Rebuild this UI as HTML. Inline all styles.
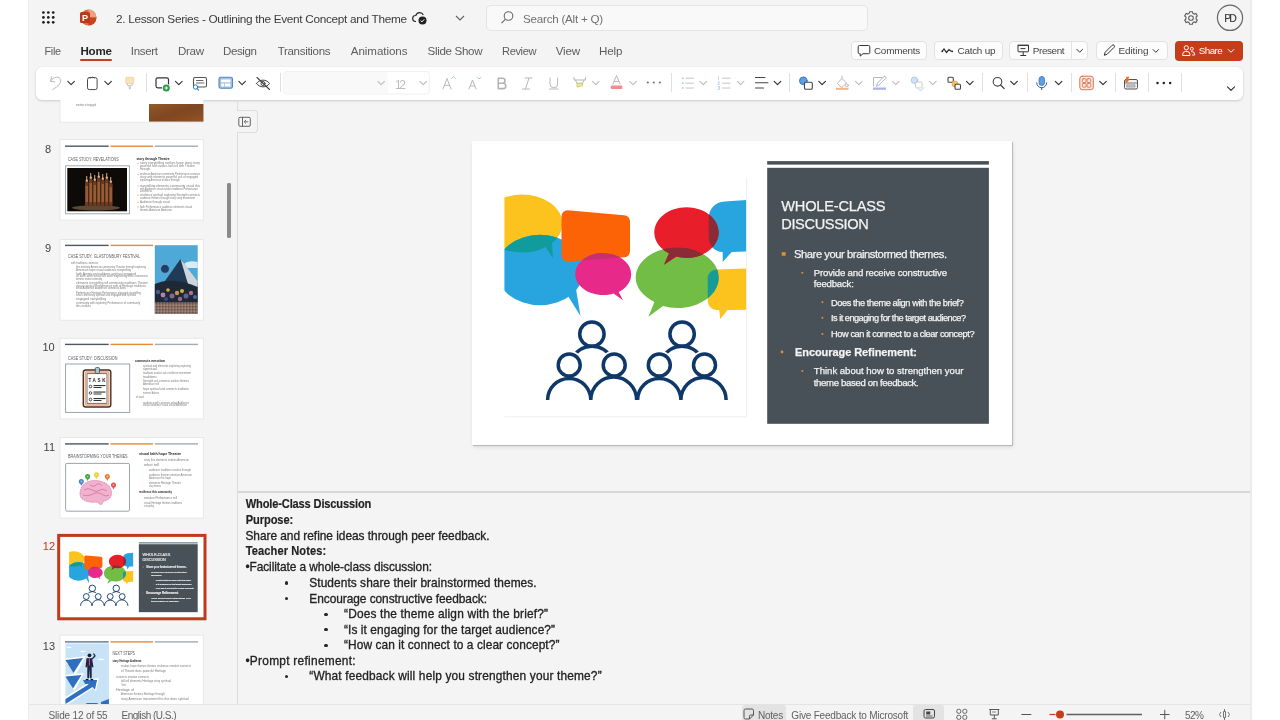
<!DOCTYPE html>
<html><head><meta charset="utf-8">
<style>
*{box-sizing:border-box;margin:0;padding:0}
html,body{width:1280px;height:720px;overflow:hidden;background:#fff}
body{position:relative;font-family:"Liberation Sans",sans-serif;-webkit-font-smoothing:antialiased}
.a{position:absolute}
.t{position:absolute;line-height:1;white-space:nowrap}
svg{position:absolute;overflow:visible}
#app{position:absolute;left:28px;top:0;width:1224px;height:720px;background:#f4f4f4;border-left:1px solid #ececec;border-right:2px solid #ebebeb}
.btn{position:absolute;top:41px;height:19px;border:1px solid #e2e2e2;border-radius:4px;background:#fcfcfc}
.tab{color:#5f5f5f;font-size:11.6px;top:45.5px}
.rdiv{position:absolute;width:1px;background:#e0e0e0;top:73px;height:19px}
</style></head><body>
<div id="app"></div>

<!-- ===== TITLE BAR ===== -->
<svg style="left:0;top:0" width="1280" height="40">
  <g fill="#1b1b1b">
    <circle cx="43.4" cy="12.5" r="1.35"/><circle cx="48.3" cy="12.5" r="1.35"/><circle cx="53.2" cy="12.5" r="1.35"/>
    <circle cx="43.4" cy="17.4" r="1.35"/><circle cx="48.3" cy="17.4" r="1.35"/><circle cx="53.2" cy="17.4" r="1.35"/>
    <circle cx="43.4" cy="22.3" r="1.35"/><circle cx="48.3" cy="22.3" r="1.35"/><circle cx="53.2" cy="22.3" r="1.35"/>
  </g>
  <!-- ppt logo -->
  <circle cx="88.5" cy="17.5" r="8" fill="#e0683f"/>
  <path d="M88.5 9.5 A8 8 0 0 1 96.5 17.5 L88.5 17.5 Z" fill="#f0a07d"/>
  <path d="M88.5 17.5 L96.5 17.5 A8 8 0 0 1 88.5 25.5 Z" fill="#c8431f"/>
  <rect x="80" y="12" width="10" height="11" rx="1.5" fill="#b93a1a"/>
  <text x="82" y="21" font-family="Liberation Sans" font-weight="bold" font-size="9" fill="#fff">P</text>
  <!-- cloud -->
  <path d="M416 21.5 h-0.5 a3 3 0 0 1 0.3 -6 a4 4 0 0 1 7.5 -0.5" fill="none" stroke="#2a2a2a" stroke-width="1.2"/>
  <circle cx="422.5" cy="20.5" r="4" fill="#222"/>
  <path d="M420.6 20.6 l1.3 1.3 l2.3 -2.5" stroke="#fff" stroke-width="1" fill="none"/>
  <!-- chevron -->
  <path d="M456 16 l4 4 l4 -4" stroke="#616161" stroke-width="1.1" fill="none"/>
  <!-- gear -->
  <g transform="translate(1191 18)" fill="none" stroke="#5c5c5c" stroke-width="1.1">
    <circle r="2.3"/>
    <path d="M-1.4 -6.2 L1.4 -6.2 L1.9 -4.6 L3.3 -3.9 L4.9 -4.5 L6.3 -2.1 L5.1 -0.9 L5.1 0.9 L6.3 2.1 L4.9 4.5 L3.3 3.9 L1.9 4.6 L1.4 6.2 L-1.4 6.2 L-1.9 4.6 L-3.3 3.9 L-4.9 4.5 L-6.3 2.1 L-5.1 0.9 L-5.1 -0.9 L-6.3 -2.1 L-4.9 -4.5 L-3.3 -3.9 L-1.9 -4.6 Z"/>
  </g>
  <circle cx="1230" cy="17.8" r="12.6" fill="none" stroke="#666" stroke-width="1.2"/>
</svg>
<div class="a" style="left:486px;top:4.5px;width:382px;height:26.5px;border:1px solid #e4e4e4;border-radius:5px;background:#f9f9f9"></div>
<svg style="left:0;top:0" width="1" height="1">
  <circle cx="508.5" cy="16" r="4.3" fill="none" stroke="#6a6a6a" stroke-width="1.1"/>
  <path d="M505.3 19.3 L501.5 23.2" stroke="#6a6a6a" stroke-width="1.2"/>
</svg>

<!-- ===== TABS ===== -->
<div class="a" style="left:80.4px;top:59px;width:31.6px;height:2px;background:#c43e1c;border-radius:1px"></div>

<!-- right buttons -->
<div class="btn" style="left:850.5px;width:76.5px"></div>
<div class="btn" style="left:934.3px;width:68.5px"></div>
<div class="btn" style="left:1009.4px;width:79px"></div>
<div class="a" style="left:1071px;top:42px;width:1px;height:17px;background:#e2e2e2"></div>
<div class="btn" style="left:1095.7px;width:72.5px"></div>
<div class="a" style="left:1175.4px;top:41.3px;width:67.5px;height:19.3px;background:#c43e1c;border-radius:4px"></div>
<svg style="left:0;top:0" width="1" height="1">
  <!-- comments icon -->
  <path d="M859.5 45.5 h9 a1.3 1.3 0 0 1 1.3 1.3 v5.6 a1.3 1.3 0 0 1 -1.3 1.3 h-5.5 l-2.8 2.4 v-2.4 h-0.7 a1.3 1.3 0 0 1 -1.3 -1.3 v-5.6 a1.3 1.3 0 0 1 1.3 -1.3z" fill="none" stroke="#333" stroke-width="1"/>
  <!-- catch up -->
  <path d="M942 51.5 l2 -2.5 l2.5 3.5 l2.5 -3 l2.5 2" fill="none" stroke="#222" stroke-width="1.2"/>
  <circle cx="942.3" cy="51.3" r="0.9" fill="#222"/><circle cx="952.2" cy="51.3" r="0.9" fill="#222"/>
  <!-- present -->
  <rect x="1018" y="45.3" width="10.5" height="6.5" rx="0.5" fill="none" stroke="#333" stroke-width="1"/>
  <path d="M1017.5 45.3 h11.5 M1023.2 52 v3.2 M1020.3 55.5 h5.8 M1020.5 48.6 h5" stroke="#333" stroke-width="1" fill="none"/>
  <path d="M1076.5 49 l3.2 3.2 l3.2 -3.2" stroke="#333" stroke-width="1" fill="none"/>
  <!-- pencil -->
  <path d="M1104.3 55.3 l0.8 -3 l7 -7 a1.4 1.4 0 0 1 2 2 l-7 7 z" fill="none" stroke="#333" stroke-width="1"/>
  <path d="M1152.8 49.3 l3 3 l3 -3" stroke="#333" stroke-width="1" fill="none"/>
  <!-- share -->
  <circle cx="1186.3" cy="47.8" r="2.1" fill="none" stroke="#fff" stroke-width="1"/>
  <path d="M1182.7 55.5 v-1.2 a2.8 2.8 0 0 1 2.8 -2.8 h1.6 a2.8 2.8 0 0 1 2.8 2.8 v1.2 z" fill="none" stroke="#fff" stroke-width="1"/>
  <circle cx="1191.8" cy="48.8" r="1.5" fill="none" stroke="#fff" stroke-width="0.9"/>
  <path d="M1191 51.7 h1.2 a2.4 2.4 0 0 1 2.4 2.4 v0.9 h-2.5" fill="none" stroke="#fff" stroke-width="0.9"/>
  <path d="M1228 49.3 l3 3 l3 -3" stroke="#fff" stroke-width="1" fill="none"/>
</svg>

<!-- ===== RIBBON ===== -->
<div class="a" style="left:36px;top:67.3px;width:1207px;height:32.5px;background:#fff;border-radius:6px;box-shadow:0 1px 2.5px rgba(0,0,0,0.16), 0 0 1px rgba(0,0,0,0.1)"></div>
<svg style="left:0;top:0" width="1" height="1" fill="none" stroke-linecap="round" stroke-linejoin="round">
  <!-- undo (disabled) -->
  <path d="M51.6 76.8 L50.4 81.2 L54.8 82" stroke="#b8b8b8" stroke-width="1"/>
  <path d="M50.6 81 C53.5 76.5 59.5 75.8 60.6 79.6 C61.5 83 58 86.5 52.8 89.5" stroke="#b8b8b8" stroke-width="1"/>
  <path d="M67.8 81.3 l3.3 3.3 l3.3 -3.3" stroke="#333" stroke-width="1.1"/>
  <!-- clipboard -->
  <rect x="87.5" y="77.6" width="9.6" height="12" rx="1.8" stroke="#4a4a4a" stroke-width="1"/>
  <path d="M90.3 77.8 q2.2 -1.6 4.2 0" stroke="#4a4a4a" stroke-width="1"/>
  <path d="M104.8 81.3 l3.3 3.3 l3.3 -3.3" stroke="#333" stroke-width="1.1"/>
  <!-- format painter (disabled, yellowish) -->
  <rect x="125.8" y="77.3" width="8" height="6.5" rx="0.8" fill="#fbe3b5" stroke="#ecd29a" stroke-width="0.8"/>
  <path d="M127.5 83.8 v1.7 h1.8 v3.5 h1 v-3.5 h1.8 v-1.7" stroke="#b8c3cb" stroke-width="0.9"/>
  <!-- new slide -->
  <rect x="156" y="77.8" width="12.5" height="10" rx="1.8" stroke="#333" stroke-width="1.2"/>
  <circle cx="166.3" cy="88" r="4.3" fill="#fff" stroke="none"/>
  <circle cx="166.3" cy="88" r="3.5" fill="#2a9a47" stroke="none"/>
  <path d="M166.3 86.3 v3.4 M164.6 88 h3.4" stroke="#fff" stroke-width="1" stroke-linecap="butt"/>
  <path d="M175.5 81.3 l3.3 3.3 l3.3 -3.3" stroke="#333" stroke-width="1.1"/>
  <!-- comment/search -->
  <rect x="193.5" y="77.5" width="13" height="9.5" rx="1.5" stroke="#555" stroke-width="1.1"/>
  <path d="M196.5 80.5 h6.5 M196.5 83 h7.5" stroke="#555" stroke-width="0.9"/>
  <circle cx="195.5" cy="87" r="2.2" fill="#fff" stroke="#2b7cd3" stroke-width="1"/>
  <path d="M197 88.6 l1.6 1.6" stroke="#2b7cd3" stroke-width="1.1"/>
  <!-- layout -->
  <rect x="219" y="77.3" width="13.5" height="11" rx="1.8" fill="#9ec3e6" stroke="#5a86b5" stroke-width="1.1"/>
  <rect x="221.2" y="79.5" width="9.2" height="2.8" fill="#fff" stroke="none"/>
  <rect x="221.2" y="83.5" width="3" height="3" fill="#fff" stroke="none"/><rect x="225" y="83.5" width="5.4" height="3" fill="#fff" stroke="none"/>
  <path d="M238.8 81.3 l3.3 3.3 l3.3 -3.3" stroke="#333" stroke-width="1.1"/>
  <!-- hide eye -->
  <path d="M256.5 83.5 c3 -4.5 10 -4.5 13 0 c-3 4.5 -10 4.5 -13 0z" stroke="#444" stroke-width="1"/>
  <circle cx="263" cy="83.5" r="2" stroke="#444" stroke-width="1"/>
  <path d="M257 77.5 l12.5 12" stroke="#444" stroke-width="1.1"/>
  <!-- font boxes -->
  <rect x="283.8" y="71.6" width="145.5" height="22.4" rx="3" fill="#fff" stroke="#efefef" stroke-width="1"/>
  <rect x="284.3" y="72.1" width="103.5" height="21.4" rx="2.5" fill="#f9f9f9" stroke="none"/>
  <path d="M378 81.5 l3.2 3.2 l3.2 -3.2" stroke="#bdbdbd" stroke-width="1.1"/>
  <path d="M420 81.5 l3.2 3.2 l3.2 -3.2" stroke="#bdbdbd" stroke-width="1.1"/>
  <!-- grow/shrink -->
  <path d="M443 89 l4 -10.5 l4 10.5 M444.5 85.3 h5" stroke="#b8b8b8" stroke-width="1"/>
  <path d="M451.5 78.5 l2 -2 l2 2" stroke="#a8c8e6" stroke-width="0.9"/>
  <path d="M469 89 l3.5 -9 l3.5 9 M470.3 86 h4.4" stroke="#b8b8b8" stroke-width="1"/>
  <path d="M477 77 l2 2 l2 -2" stroke="#a8c8e6" stroke-width="0.9"/>
  <!-- B I U -->
  <path d="M498.3 78.2 h4.2 a2.5 2.5 0 0 1 0 5 h-4.2 z M498.3 83.2 h4.8 a2.7 2.7 0 0 1 0 5.4 h-4.8 z" stroke="#b3b3b3" stroke-width="1.6"/>
  <path d="M525 78 h7 M522.5 89 h7 M529 78 l-3.5 11" stroke="#b8b8b8" stroke-width="1"/>
  <path d="M550 78 v6 a3.8 3.8 0 0 0 7.6 0 v-6 M549.5 89 h8.5" stroke="#b8b8b8" stroke-width="1"/>
  <!-- highlighter -->
  <path d="M574 77.5 v2.5 h11.5 v-2.5" stroke="#b8b8b8" stroke-width="1"/>
  <path d="M575.5 80 l1.5 3.5 h5.5 l1.5 -3.5" stroke="#b8b8b8" stroke-width="1"/>
  <path d="M577 83.5 v3.5 l5.5 -1.3 v-2.2 z" fill="#f3ef8a" stroke="#c9c36a" stroke-width="0.8"/>
  <path d="M592.5 81.3 l3.3 3.3 l3.3 -3.3" stroke="#bdbdbd" stroke-width="1.1"/>
  <!-- font color -->
  <path d="M613 84 l3.5 -8.5 l3.5 8.5 M614.3 81.5 h4.4" stroke="#b8b8b8" stroke-width="1"/>
  <rect x="610.8" y="85.5" width="11.5" height="3.5" rx="0.8" fill="#f48b8f" stroke="none"/>
  <path d="M629.8 81.3 l3.3 3.3 l3.3 -3.3" stroke="#bdbdbd" stroke-width="1.1"/>
  <g fill="#707070" stroke="none"><circle cx="647.8" cy="82.5" r="1.1"/><circle cx="653.8" cy="82.5" r="1.1"/><circle cx="659.8" cy="82.5" r="1.1"/></g>
  <!-- bullets -->
  <g fill="#a9c9e8" stroke="none"><circle cx="682.8" cy="78.2" r="0.9"/><circle cx="682.8" cy="83.2" r="0.9"/><circle cx="682.8" cy="88" r="0.9"/></g>
  <path d="M686 78.2 h7.5 M686 83.2 h7.5 M686 88 h7.5" stroke="#c4c4c4" stroke-width="1"/>
  <path d="M700 81.3 l3.3 3.3 l3.3 -3.3" stroke="#bdbdbd" stroke-width="1.1"/>
  <path d="M718.5 76.5 v3.3 M718 82 h1.5 l-1.5 2.5 h1.5 M718 86.5 h1.5 v3 h-1.5 M718.3 88 h1" stroke="#a9c9e8" stroke-width="0.7"/>
  <path d="M722.5 78.2 h7.5 M722.5 83.2 h7.5 M722.5 88 h7.5" stroke="#c4c4c4" stroke-width="1"/>
  <path d="M737.3 81.3 l3.3 3.3 l3.3 -3.3" stroke="#bdbdbd" stroke-width="1.1"/>
  <!-- align -->
  <path d="M755.5 77.5 h9.5 M755.5 82.8 h12.5 M755.5 88 h8" stroke="#444" stroke-width="1.1"/>
  <path d="M774.2 81.3 l3.3 3.3 l3.3 -3.3" stroke="#333" stroke-width="1.2"/>
  <!-- shapes -->
  <circle cx="803.3" cy="80.8" r="3.8" fill="#5aa0e6" stroke="#2b6fc0" stroke-width="0.9"/>
  <rect x="804.5" y="82.3" width="7.8" height="7" rx="1.3" fill="#fff" stroke="#444" stroke-width="1.1"/>
  <path d="M818.8 81.3 l3.3 3.3 l3.3 -3.3" stroke="#333" stroke-width="1.2"/>
  <!-- fill -->
  <path d="M837.5 83 l4.5 -4.5 l4.5 4.5 l-4.5 4.5 z M842 78.5 v-2.5" stroke="#b8b8b8" stroke-width="1"/>
  <circle cx="846.8" cy="85.3" r="1.5" stroke="#b8b8b8" stroke-width="0.9"/>
  <rect x="836" y="87.8" width="12.5" height="2" fill="#f5b58c" stroke="none"/>
  <path d="M855.5 81.3 l3.3 3.3 l3.3 -3.3" stroke="#bdbdbd" stroke-width="1.1"/>
  <!-- line -->
  <path d="M873.5 86 v-8.5 h9" stroke="#b8b8b8" stroke-width="1"/>
  <path d="M876.5 86 l1 -3 l6.5 -6.5 a1.3 1.3 0 0 1 1.8 1.8 l-6.5 6.5 z" stroke="#b8b8b8" stroke-width="1"/>
  <rect x="873" y="87.5" width="13" height="2.3" fill="#aab4ea" stroke="none"/>
  <path d="M892.5 81.3 l3.3 3.3 l3.3 -3.3" stroke="#bdbdbd" stroke-width="1.1"/>
  <!-- effects -->
  <circle cx="914.5" cy="80.3" r="3.3" fill="#cfe2f5" stroke="#a9c9e8" stroke-width="0.9"/>
  <rect x="915.5" y="82" width="6.5" height="6" rx="1.2" fill="#fff" stroke="#c4c4c4" stroke-width="0.9"/>
  <path d="M919 89.5 l1.5 1.5 l3.5 -3.5" stroke="#a9c9e8" stroke-width="0.9"/>
  <path d="M929.5 81.3 l3.3 3.3 l3.3 -3.3" stroke="#bdbdbd" stroke-width="1.1"/>
  <!-- arrange -->
  <rect x="948" y="77.3" width="5.3" height="5" rx="1" stroke="#444" stroke-width="1.1"/>
  <circle cx="955" cy="84" r="3" fill="#f5c15c" stroke="#e8a93a" stroke-width="0.8"/>
  <rect x="955" y="84.3" width="5.5" height="5" rx="1" fill="#fff" stroke="#444" stroke-width="1.1"/>
  <path d="M966.5 81.3 l3.3 3.3 l3.3 -3.3" stroke="#333" stroke-width="1.2"/>
  <!-- search -->
  <circle cx="997.5" cy="81.8" r="4.3" stroke="#444" stroke-width="1.1"/>
  <path d="M1000.6 85 l3.5 3.5" stroke="#444" stroke-width="1.2"/>
  <path d="M1010.7 81.3 l3.3 3.3 l3.3 -3.3" stroke="#333" stroke-width="1.2"/>
  <!-- mic -->
  <rect x="1039" y="76.5" width="5.5" height="9" rx="2.75" fill="#5d9fe3" stroke="#3778c8" stroke-width="0.8"/>
  <path d="M1036.7 82.8 a5 5 0 0 0 10 0 M1041.7 87.8 v1.8" stroke="#3a5c84" stroke-width="1"/>
  <path d="M1055.3 81.3 l3.3 3.3 l3.3 -3.3" stroke="#333" stroke-width="1.2"/>
  <!-- designer -->
  <rect x="1079.8" y="76.2" width="13.5" height="13.5" rx="2.5" fill="#fde9e2" stroke="#e0704c" stroke-width="1"/>
  <g stroke="#e0704c" stroke-width="0.9"><rect x="1082.3" y="78.7" width="3.8" height="3.8" rx="1"/><rect x="1087" y="78.7" width="3.8" height="3.8" rx="1"/><rect x="1082.3" y="83.4" width="3.8" height="3.8" rx="1"/><rect x="1087" y="83.4" width="3.8" height="3.8" rx="1"/></g>
  <path d="M1099.7 81.3 l3.3 3.3 l3.3 -3.3" stroke="#333" stroke-width="1.2"/>
  <!-- add-ins -->
  <rect x="1124.5" y="79.5" width="13" height="9.5" rx="1.5" fill="#f2f2f2" stroke="#555" stroke-width="1"/>
  <path d="M1124.5 83 h13" stroke="#555" stroke-width="0.8"/>
  <rect x="1127" y="84.8" width="8" height="2.3" fill="#c9c9c9" stroke="#777" stroke-width="0.5"/>
  <path d="M1125.2 82 l1.2 -5.2 h3 l-1.2 2.4 h1.6 l-3 3.6z" fill="#ea6b26" stroke="none"/>
  <g fill="#222" stroke="none"><circle cx="1157.5" cy="83" r="1.25"/><circle cx="1163.8" cy="83" r="1.25"/><circle cx="1170.1" cy="83" r="1.25"/></g>
  <path d="M1227.5 86.8 l3.5 3.5 l3.5 -3.5" stroke="#333" stroke-width="1.2"/>
</svg>
<div class="rdiv" style="left:146.4px"></div>
<div class="rdiv" style="left:279.5px"></div>
<div class="rdiv" style="left:670.6px"></div>
<div class="rdiv" style="left:789.4px"></div>
<div class="rdiv" style="left:982px"></div>
<div class="rdiv" style="left:1026.5px"></div>
<div class="rdiv" style="left:1070.8px"></div>
<div class="rdiv" style="left:1114.7px"></div>
<div class="rdiv" style="left:1148px"></div>
<div class="rdiv" style="left:1180.8px"></div>


<!-- ===== PANES ===== -->
<!-- separators -->
<div class="a" style="left:236.5px;top:100px;width:1px;height:10px;background:#dcdcdc"></div>
<div class="a" style="left:236.5px;top:110px;width:21px;height:23px;border:1px solid #dcdcdc;border-left:none;border-radius:0 4px 4px 0;background:#f4f4f4"></div>
<div class="a" style="left:236.5px;top:133px;width:1px;height:571px;background:#dcdcdc"></div>
<svg style="left:0;top:0" width="1" height="1" fill="none">
  <rect x="238.8" y="117.3" width="11.5" height="9" rx="1.3" stroke="#555" stroke-width="0.9"/>
  <path d="M242.5 117.3 v9" stroke="#555" stroke-width="0.9"/>
  <path d="M248.3 121.8 h-4 M246 120 l-1.8 1.8 l1.8 1.8" stroke="#555" stroke-width="0.8"/>
</svg>
<div class="a" style="left:237.5px;top:491px;width:1012.5px;height:1.6px;background:#d8d8d8"></div>
<div class="a" style="left:29px;top:704px;width:1221px;height:1px;background:#e4e4e4"></div>
<!-- scrollbar -->
<div class="a" style="left:226.7px;top:183px;width:4.6px;height:55px;background:#8a8a8a;border-radius:3px"></div>
<div class="a" id="mainslide" style="left:472px;top:141px;width:540px;height:304px;background:#fff;box-shadow:1px 1px 0 #b9b9b9, 1px 2px 4px rgba(0,0,0,0.12)">
<svg style="left:0;top:0" width="540" height="304" viewBox="472 141 540 304">
<defs>
  <clipPath id="imgclip"><rect x="504.4" y="177" width="242.3" height="240"/></clipPath>
  <path id="pYel" d="M481.5 223.6 a40.5 29 0 0 1 81.0 0 a40.5 29 0 0 1 -81.0 0z M552 242 L553 258.5 L545 246z"/>
  <path id="pBlue" d="M496 270 a44 35.3 0 0 1 88 0 a44 35.3 0 0 1 -88 0z M576 289 L580.5 316 L568 296z"/>
  <path id="pOra" d="M567.5 210.3 l56.5 5 a6 6 0 0 1 6 6 v30 a6 6 0 0 1 -5.5 6 l-57 4.2 a6 6 0 0 1 -6 -6 v-39.2 a6 6 0 0 1 6 -6z"/>
  <path id="pPink" d="M603.2 253.2 c15.5 0 28 9.4 28 21 c0 7.5 -5 14 -12.5 17.8 l4.3 8.3 l-9.5 -6.8 c-3.3 1 -6.8 1.6 -10.3 1.6 c-15.5 0 -28 -9.4 -28 -21 c0 -11.6 12.5 -21 28 -21z"/>
  <path id="pRed" d="M686.5 207.3 c17.8 0 32.2 11.3 32.2 25.3 c0 14 -14.4 25.3 -32.2 25.3 c-3.5 0 -7 -0.4 -10.2 -1.3 l-12.3 8.2 l5 -11.5 c-9 -4.4 -14.7 -12 -14.7 -20.7 c0 -14 14.4 -25.3 32.2 -25.3z"/>
  <path id="pGreen" d="M677.2 247.4 c22.9 0 41.5 13.6 41.5 30.3 c0 16.7 -18.6 30.3 -41.5 30.3 c-5 0 -9.8 -0.7 -14.2 -1.9 l-14.6 10.6 l6 -14.7 c-11 -5.5 -18.7 -14.3 -18.7 -24.3 c0 -16.7 18.6 -30.3 41.5 -30.3z"/>
  <path id="pBlueR" d="M746.7 200 l-22 1.5 c-10 0.5 -16 8 -16 17 v18 c0 9 6 15.5 14 15.5 l0 10 l9 -10 l15 -0.5z"/>
  <path id="pYelR" d="M746.7 268.5 l-30 1 c-5 0.2 -9 4 -9 9 v22 c0 5 4 9.5 9 9.5 h2.5 l1 9 l7.5 -9 l19 -0.3z"/>
</defs>
<g id="slideart">
<g clip-path="url(#imgclip)">
  <use href="#pYel" fill="#fcc31e"/>
  <use href="#pBlue" fill="#28a5df"/>
  <g clip-path="url(#cYel)"><use href="#pBlue" fill="#109c9c"/></g>
  <use href="#pOra" fill="#fc6307"/>
  <use href="#pPink" fill="#e72a89"/>
  <g clip-path="url(#cOra)"><use href="#pPink" fill="#c72f6e"/></g>
  <use href="#pBlueR" fill="#28a5df"/>
  <use href="#pYelR" fill="#fcc31e"/>
  <use href="#pGreen" fill="#71bd45"/>
  <g clip-path="url(#cYelR)"><use href="#pGreen" fill="#169b97"/></g>
  <use href="#pRed" fill="#e81f2a"/>
  <g clip-path="url(#cGreen)"><use href="#pRed" fill="#8c2b36"/></g>
  <g clip-path="url(#cBlueR)"><use href="#pRed" fill="#8c2b36"/></g>
</g>
<clipPath id="cYel"><use href="#pYel"/></clipPath>
<clipPath id="cOra"><use href="#pOra"/></clipPath>
<clipPath id="cYelR"><use href="#pYelR"/></clipPath>
<clipPath id="cGreen"><use href="#pGreen"/></clipPath>
<clipPath id="cBlueR"><use href="#pBlueR"/></clipPath>
<!-- people -->
<g fill="none" stroke="#0e3869" stroke-width="3.5">
  <path d="M572 359 A22 22 0 0 1 612 359"/>
  <path d="M662 359 A22 22 0 0 1 702 359"/>
  <circle cx="591.9" cy="334.1" r="12.2"/>
  <circle cx="682.1" cy="334.1" r="12.2"/>
  <g stroke="#fff" stroke-width="7" fill="#fff">
    <circle cx="569.2" cy="365" r="11"/><circle cx="614.2" cy="365" r="11"/><circle cx="659.3" cy="365" r="11"/><circle cx="704.5" cy="365" r="11"/>
  </g>
  <circle cx="569.2" cy="365" r="11"/><circle cx="614.2" cy="365" r="11"/><circle cx="659.3" cy="365" r="11"/><circle cx="704.5" cy="365" r="11"/>
  <path d="M547.6 400 A21.6 21.6 0 0 1 590.8 400 A21.6 21.6 0 0 1 636.6 400 M637.6 400 A21.6 21.6 0 0 1 680.9 400 A21.6 21.6 0 0 1 726.1 400" stroke-linejoin="miter"/>
</g>
<!-- image edge -->
<path d="M746.7 177.5 V416.8 H504.4" fill="none" stroke="#eeeeee" stroke-width="1"/>
<!-- panel -->
<rect x="767.2" y="161.1" width="221.7" height="3.5" fill="#475157"/>
<rect x="767.2" y="167.8" width="221.7" height="256" fill="#475157"/>
<rect x="781.7" y="252.2" width="4" height="3.5" fill="#e48b3b"/>
<g fill="#e48b3b"><circle cx="802.3" cy="272.8" r="1"/><circle cx="822.4" cy="302.3" r="1"/><circle cx="822.4" cy="317.8" r="1"/><circle cx="822.4" cy="334" r="1"/><circle cx="782" cy="352" r="1.4"/><circle cx="802.3" cy="371" r="1"/></g>
</g>
</svg>
</div>

<div class="a" style="left:285.15px;top:581.40px;width:3.2px;height:3.2px;border-radius:50%;background:#252525"></div>
<div class="a" style="left:285.15px;top:597.00px;width:3.2px;height:3.2px;border-radius:50%;background:#252525"></div>
<div class="a" style="left:324.40px;top:612.50px;width:3.2px;height:3.2px;border-radius:50%;background:#252525"></div>
<div class="a" style="left:324.40px;top:628.00px;width:3.2px;height:3.2px;border-radius:50%;background:#252525"></div>
<div class="a" style="left:324.40px;top:643.60px;width:3.2px;height:3.2px;border-radius:50%;background:#252525"></div>
<div class="a" style="left:285.15px;top:674.60px;width:3.2px;height:3.2px;border-radius:50%;background:#252525"></div>



<div class="a" style="left:29px;top:100px;width:207px;height:604px;overflow:hidden;will-change:transform">
<svg style="left:-29px;top:-100px" width="1280" height="720" viewBox="0 0 1280 720">
<rect x="60" y="41.6" width="143.3" height="80.6" fill="#fff" stroke="#e3e3e3" stroke-width="0.8"/>
<rect x="149" y="104" width="54.3" height="17.5" fill="#8a4f25"/>
<rect x="149" y="104" width="54.3" height="17.5" fill="url(#wood)"/>
<text x="76" y="106.4" font-size="2.7" fill="#7a7a7a"  textLength="20" lengthAdjust="spacingAndGlyphs">emotion of engaged</text>
<rect x="60" y="139.5" width="143.3" height="80.6" fill="#fff" stroke="#e3e3e3" stroke-width="0.8"/>
<rect x="65" y="145.5" width="43.7" height="1.4" fill="#4d5961"/>
<rect x="110.5" y="145.5" width="42.5" height="1.4" fill="#e48b3b"/>
<rect x="154.8" y="145.5" width="43.2" height="1.4" fill="#a3abb0"/>
<text x="67.9" y="160.6" font-size="4.69" fill="#5a5a5a" textLength="50.7" lengthAdjust="spacingAndGlyphs">CASE STUDY: REVELATIONS</text>
<rect x="65.6" y="165.8" width="63.8" height="48" fill="#fff" stroke="#97a2a8" stroke-width="0.9"/>
<rect x="67.3" y="168" width="59.7" height="43.3" fill="#0d0a08"/>
<ellipse cx="96" cy="207.8" rx="24" ry="2.6" fill="#7a5e42" opacity="0.75"/>
<rect x="85" y="182" width="3.6" height="24" rx="1.2" fill="#6b3b22"/>
<rect x="85.6" y="186" width="2.4" height="16" fill="#a0653c" opacity="0.8"/>
<circle cx="86.8" cy="180.8" r="1.3" fill="#d9a57a"/>
<rect x="86.3" y="176" width="0.9" height="4.5" fill="#e2c3a0"/>
<rect x="89" y="179" width="3.6" height="27" rx="1.2" fill="#6b3b22"/>
<rect x="89.6" y="183" width="2.4" height="19" fill="#a0653c" opacity="0.8"/>
<circle cx="90.8" cy="177.8" r="1.3" fill="#d9a57a"/>
<rect x="90.3" y="173" width="0.9" height="4.5" fill="#e2c3a0"/>
<rect x="93" y="181" width="3.6" height="25" rx="1.2" fill="#6b3b22"/>
<rect x="93.6" y="185" width="2.4" height="17" fill="#a0653c" opacity="0.8"/>
<circle cx="94.8" cy="179.8" r="1.3" fill="#d9a57a"/>
<rect x="94.3" y="175" width="0.9" height="4.5" fill="#e2c3a0"/>
<rect x="97" y="178" width="3.6" height="28" rx="1.2" fill="#6b3b22"/>
<rect x="97.6" y="182" width="2.4" height="20" fill="#a0653c" opacity="0.8"/>
<circle cx="98.8" cy="176.8" r="1.3" fill="#d9a57a"/>
<rect x="98.3" y="172" width="0.9" height="4.5" fill="#e2c3a0"/>
<rect x="101" y="180" width="3.6" height="26" rx="1.2" fill="#6b3b22"/>
<rect x="101.6" y="184" width="2.4" height="18" fill="#a0653c" opacity="0.8"/>
<circle cx="102.8" cy="178.8" r="1.3" fill="#d9a57a"/>
<rect x="102.3" y="174" width="0.9" height="4.5" fill="#e2c3a0"/>
<rect x="105" y="179" width="3.6" height="27" rx="1.2" fill="#6b3b22"/>
<rect x="105.6" y="183" width="2.4" height="19" fill="#a0653c" opacity="0.8"/>
<circle cx="106.8" cy="177.8" r="1.3" fill="#d9a57a"/>
<rect x="106.3" y="173" width="0.9" height="4.5" fill="#e2c3a0"/>
<rect x="109" y="183" width="3.6" height="23" rx="1.2" fill="#6b3b22"/>
<rect x="109.6" y="187" width="2.4" height="15" fill="#a0653c" opacity="0.8"/>
<circle cx="110.8" cy="181.8" r="1.3" fill="#d9a57a"/>
<rect x="110.3" y="177" width="0.9" height="4.5" fill="#e2c3a0"/>
<text x="136.5" y="159.9" font-size="3.0" fill="#222" font-weight="bold" textLength="33" lengthAdjust="spacingAndGlyphs">story through Theatre</text>
<text x="140" y="164.4" font-size="2.7" fill="#7a7a7a"  textLength="60" lengthAdjust="spacingAndGlyphs">story storytelling evokes hope story story</text>
<text x="140" y="167.4" font-size="2.7" fill="#7a7a7a"  textLength="55" lengthAdjust="spacingAndGlyphs">powerful faith evokes faith tell with Theatre</text>
<text x="140" y="170.4" font-size="2.7" fill="#7a7a7a"  textLength="10" lengthAdjust="spacingAndGlyphs">through</text>
<text x="140" y="175.4" font-size="2.7" fill="#7a7a7a"  textLength="60" lengthAdjust="spacingAndGlyphs">resilience American community Performance connects</text>
<text x="140" y="178.4" font-size="2.7" fill="#7a7a7a"  textLength="58" lengthAdjust="spacingAndGlyphs">story with elements powerful ask of engaged</text>
<text x="140" y="181.1" font-size="2.7" fill="#7a7a7a"  textLength="40" lengthAdjust="spacingAndGlyphs">exploring American of does Strength</text>
<text x="140" y="186.9" font-size="2.7" fill="#7a7a7a"  textLength="60" lengthAdjust="spacingAndGlyphs">storytelling elements community visual this</text>
<text x="140" y="189.5" font-size="2.7" fill="#7a7a7a"  textLength="58" lengthAdjust="spacingAndGlyphs">with Audience visual evokes traditions Performance</text>
<text x="140" y="192.1" font-size="2.7" fill="#7a7a7a"  textLength="12" lengthAdjust="spacingAndGlyphs">connects</text>
<text x="140" y="196.20000000000002" font-size="2.7" fill="#7a7a7a"  textLength="60" lengthAdjust="spacingAndGlyphs">resilience spiritual exploring Strength connects</text>
<text x="140" y="198.9" font-size="2.7" fill="#7a7a7a"  textLength="55" lengthAdjust="spacingAndGlyphs">audience themes through story story movement</text>
<text x="140" y="203.20000000000002" font-size="2.7" fill="#7a7a7a"  textLength="30" lengthAdjust="spacingAndGlyphs">Audience through visual</text>
<text x="140" y="207.9" font-size="2.7" fill="#7a7a7a"  textLength="52" lengthAdjust="spacingAndGlyphs">faith Performance audience elements visual</text>
<text x="140" y="210.5" font-size="2.7" fill="#7a7a7a"  textLength="32" lengthAdjust="spacingAndGlyphs">themes American American</text>
<rect x="137.5" y="163.0" width="1" height="1" fill="#e48b3b"/>
<rect x="137.5" y="174.0" width="1" height="1" fill="#e48b3b"/>
<rect x="137.5" y="185.5" width="1" height="1" fill="#e48b3b"/>
<rect x="137.5" y="194.8" width="1" height="1" fill="#e48b3b"/>
<rect x="137.5" y="201.8" width="1" height="1" fill="#e48b3b"/>
<rect x="137.5" y="206.5" width="1" height="1" fill="#e48b3b"/>
<rect x="60" y="239.6" width="143.3" height="80.6" fill="#fff" stroke="#e3e3e3" stroke-width="0.8"/>
<rect x="65" y="244.70000000000002" width="43.7" height="1.4" fill="#4d5961"/>
<rect x="110.5" y="244.70000000000002" width="42.5" height="1.4" fill="#e48b3b"/>
<text x="68" y="257.9" font-size="4.69" fill="#5a5a5a" textLength="72" lengthAdjust="spacingAndGlyphs">CASE STUDY: GLASTONBURY FESTIVAL</text>
<text x="71" y="264.4" font-size="2.7" fill="#7a7a7a"  textLength="27" lengthAdjust="spacingAndGlyphs">with traditions connects</text>
<text x="76" y="268.4" font-size="2.7" fill="#7a7a7a"  textLength="70" lengthAdjust="spacingAndGlyphs">this emotion American community Theatre through exploring</text>
<text x="76" y="270.9" font-size="2.7" fill="#7a7a7a"  textLength="55" lengthAdjust="spacingAndGlyphs">American hope visual audience storytelling</text>
<text x="76" y="274.9" font-size="2.7" fill="#7a7a7a"  textLength="60" lengthAdjust="spacingAndGlyphs">faith American traditions spiritual engaged</text>
<text x="76" y="277.4" font-size="2.7" fill="#7a7a7a"  textLength="72" lengthAdjust="spacingAndGlyphs">of with with what tell with exploring this connects</text>
<text x="76" y="279.9" font-size="2.7" fill="#7a7a7a"  textLength="26" lengthAdjust="spacingAndGlyphs">elements emotion community</text>
<text x="76" y="284.4" font-size="2.7" fill="#7a7a7a"  textLength="72" lengthAdjust="spacingAndGlyphs">elements storytelling tell community traditions Theatre</text>
<text x="76" y="286.9" font-size="2.7" fill="#7a7a7a"  textLength="70" lengthAdjust="spacingAndGlyphs">visual spiritual Performance with of Heritage traditions</text>
<text x="76" y="289.4" font-size="2.7" fill="#7a7a7a"  textLength="50" lengthAdjust="spacingAndGlyphs">what Audience Audience connects does</text>
<text x="76" y="293.9" font-size="2.7" fill="#7a7a7a"  textLength="65" lengthAdjust="spacingAndGlyphs">Performance Heritage Performance engaged storytelling</text>
<text x="76" y="296.4" font-size="2.7" fill="#7a7a7a"  textLength="60" lengthAdjust="spacingAndGlyphs">what community spiritual and engaged and spiritual</text>
<text x="76" y="299.9" font-size="2.7" fill="#7a7a7a"  textLength="30" lengthAdjust="spacingAndGlyphs">engaged storytelling</text>
<text x="76" y="304.4" font-size="2.7" fill="#7a7a7a"  textLength="64" lengthAdjust="spacingAndGlyphs">community with exploring Performance of community</text>
<text x="76" y="306.9" font-size="2.7" fill="#7a7a7a"  textLength="15" lengthAdjust="spacingAndGlyphs">this evokes</text>
<rect x="154.8" y="245.2" width="42.9" height="68.6" fill="#4fa9d6"/>
<path d="M185 263 q5 -3 12.7 -1 V268 H182z" fill="#e8f2f8" opacity="0.9"/>
<path d="M180.5 259 L160 288 L197.7 288 L197.7 283 Z" fill="#1f3b56"/>
<path d="M180.5 259 L197.7 281.5 V292 L188 284 Z" fill="#cfd6db"/>
<circle cx="165" cy="268.8" r="4.4" fill="#1d3f6b" stroke="#9fb9d3" stroke-width="0.5"/>
<path d="M154.8 284 Q172 276 197.7 287 V303 H154.8Z" fill="#1e2836"/>
<circle cx="158" cy="292" r="2.2" fill="#4a5f98" opacity="0.9"/>
<circle cx="163" cy="295" r="2.4" fill="#c58db5" opacity="0.9"/>
<circle cx="168" cy="290" r="1.8" fill="#e9c03a" opacity="0.9"/>
<circle cx="172" cy="296" r="2.5" fill="#8e6f9e" opacity="0.9"/>
<circle cx="177" cy="293" r="2.2" fill="#d7a34a" opacity="0.9"/>
<circle cx="182" cy="291" r="2.0" fill="#e8c13c" opacity="0.9"/>
<circle cx="186" cy="296" r="2.5" fill="#6c64a8" opacity="0.9"/>
<circle cx="191" cy="293" r="2.2" fill="#b97d99" opacity="0.9"/>
<circle cx="195" cy="297" r="2" fill="#5a6fa8" opacity="0.9"/>
<circle cx="166" cy="299" r="2" fill="#3c4e8a" opacity="0.9"/>
<circle cx="180" cy="299" r="2.2" fill="#a47090" opacity="0.9"/>
<rect x="154.8" y="302.5" width="42.9" height="11.3" fill="#8a6d62"/>
<rect x="154.8" y="302.5" width="42.9" height="11.3" fill="url(#crowd)" opacity="0.6"/>
<defs><pattern id="crowd" width="3" height="3" patternUnits="userSpaceOnUse"><rect width="1.5" height="1.5" fill="#5a463f"/><rect x="1.5" y="1.5" width="1.5" height="1.5" fill="#b39a8c"/></pattern></defs>
<rect x="60" y="338.3" width="143.3" height="80.6" fill="#fff" stroke="#e3e3e3" stroke-width="0.8"/>
<rect x="65" y="343.7" width="43.7" height="1.4" fill="#4d5961"/>
<rect x="110.5" y="343.7" width="42.5" height="1.4" fill="#e48b3b"/>
<rect x="154.8" y="343.7" width="43.2" height="1.4" fill="#a3abb0"/>
<text x="68" y="359.9" font-size="4.69" fill="#5a5a5a" textLength="49.5" lengthAdjust="spacingAndGlyphs">CASE STUDY: DISCUSSION</text>
<rect x="65.6" y="364" width="64.1" height="48.4" fill="#fff" stroke="#8f9aa0" stroke-width="0.9"/>
<rect x="83.3" y="370" width="27.5" height="37" rx="2.5" fill="#fff" stroke="#4b2e22" stroke-width="1.4"/>
<rect x="85.3" y="372" width="23.5" height="33" rx="1.2" fill="#fff" stroke="#e4a47a" stroke-width="1.3"/>
<rect x="87" y="373.7" width="20" height="29.6" fill="#fff" stroke="#4b2e22" stroke-width="0.7"/>
<rect x="95.3" y="367.5" width="4.2" height="6" rx="1.2" fill="#a9c3d4" stroke="#3a3a3a" stroke-width="0.7"/>
<text x="88.5" y="382.3" font-size="4.6" font-weight="bold" fill="#222" textLength="17" lengthAdjust="spacing">TASK</text>
<circle cx="90.5" cy="386.5" r="1.3" fill="none" stroke="#222" stroke-width="0.8"/>
<rect x="93.5" y="385.0" width="12" height="1.1" fill="#333"/><rect x="93.5" y="387.0" width="8" height="1" fill="#333"/>
<circle cx="90.5" cy="393" r="1.3" fill="none" stroke="#222" stroke-width="0.8"/>
<rect x="93.5" y="391.5" width="12" height="1.1" fill="#333"/><rect x="93.5" y="393.5" width="8" height="1" fill="#333"/>
<circle cx="90.5" cy="399.5" r="1.3" fill="none" stroke="#222" stroke-width="0.8"/>
<rect x="93.5" y="398.0" width="12" height="1.1" fill="#333"/><rect x="93.5" y="400.0" width="8" height="1" fill="#333"/>
<text x="135" y="361.9" font-size="3.0" fill="#222" font-weight="bold" textLength="30" lengthAdjust="spacingAndGlyphs">connects emotion</text>
<text x="143" y="366.9" font-size="2.7" fill="#7a7a7a"  textLength="48" lengthAdjust="spacingAndGlyphs">spiritual and elements exploring exploring</text>
<text x="143" y="369.9" font-size="2.7" fill="#7a7a7a"  textLength="14" lengthAdjust="spacingAndGlyphs">spiritual</text>
<text x="143" y="374.4" font-size="2.7" fill="#7a7a7a"  textLength="48" lengthAdjust="spacingAndGlyphs">traditions evokes ask resilience movement</text>
<text x="143" y="377.9" font-size="2.7" fill="#7a7a7a"  textLength="14" lengthAdjust="spacingAndGlyphs">traditions</text>
<text x="143" y="381.9" font-size="2.7" fill="#7a7a7a"  textLength="46" lengthAdjust="spacingAndGlyphs">Strength ask connects evokes themes</text>
<text x="143" y="384.9" font-size="2.7" fill="#7a7a7a"  textLength="16" lengthAdjust="spacingAndGlyphs">American tell</text>
<text x="143" y="390.4" font-size="2.7" fill="#7a7a7a"  textLength="46" lengthAdjust="spacingAndGlyphs">hope spiritual and connects traditions</text>
<text x="143" y="393.5" font-size="2.7" fill="#7a7a7a"  textLength="16" lengthAdjust="spacingAndGlyphs">movement Audience</text>
<text x="136" y="398.4" font-size="2.7" fill="#7a7a7a"  textLength="8" lengthAdjust="spacingAndGlyphs">of visual</text>
<text x="143" y="403.5" font-size="2.7" fill="#7a7a7a"  textLength="46" lengthAdjust="spacingAndGlyphs">audience tell connects what Audience</text>
<text x="143" y="406.4" font-size="2.7" fill="#7a7a7a"  textLength="44" lengthAdjust="spacingAndGlyphs">visual audience visual visual American</text>
<rect x="60" y="437.5" width="143.3" height="80.6" fill="#fff" stroke="#e3e3e3" stroke-width="0.8"/>
<rect x="65" y="443.2" width="43.7" height="1.4" fill="#4d5961"/>
<rect x="110.5" y="443.2" width="42.5" height="1.4" fill="#e48b3b"/>
<rect x="154.8" y="443.2" width="43.2" height="1.4" fill="#a3abb0"/>
<text x="68" y="458.4" font-size="4.69" fill="#5a5a5a" textLength="59.6" lengthAdjust="spacingAndGlyphs">BRAINSTORMING YOUR THEMES</text>
<rect x="65.6" y="463.4" width="63.9" height="47.8" rx="1.5" fill="#fff" stroke="#8f9aa0" stroke-width="0.9"/>
<path d="M80 494 C80 484 88 480 96 480.5 C104 481 111 485 111.5 492 C112 497 109 500 104 501 L101 505 L97 502 C90 503 80 501 80 494Z" fill="#efb3cf"/>
<path d="M80 494 C80 484 88 480 96 480.5 C104 481 111 485 111.5 492 C112 497 109 500 104 501 L101 505 L97 502 C90 503 80 501 80 494Z" fill="none" stroke="#dc5b95" stroke-width="0.7" stroke-dasharray="1.2 0.8"/>
<path d="M84 490 q4 -3 8 0 q4 3 8 0 q3 -2 7 1 M83 495 q5 2 10 -1 q5 -3 10 1 q3 2 6 0 M90 485 q3 3 6 0 q3 -3 6 1" stroke="#d9558f" stroke-width="0.6" fill="none"/>
<circle cx="81.3" cy="481.5" r="2.5" fill="#4a86c8"/><path d="M79.8 482.7 L81.3 486.0 L82.8 482.7z" fill="#4a86c8"/><circle cx="81.3" cy="481.5" r="0.9" fill="#fff" opacity="0.5"/>
<circle cx="87.6" cy="476.6" r="2.5" fill="#3fa34d"/><path d="M86.1 477.8 L87.6 481.1 L89.1 477.8z" fill="#3fa34d"/><circle cx="87.6" cy="476.6" r="0.9" fill="#fff" opacity="0.5"/>
<circle cx="96.5" cy="474.7" r="2.5" fill="#f2cd2e"/><path d="M95.0 475.9 L96.5 479.2 L98.0 475.9z" fill="#f2cd2e"/><circle cx="96.5" cy="474.7" r="0.9" fill="#fff" opacity="0.5"/>
<circle cx="107.3" cy="476.5" r="2.5" fill="#ec7a30"/><path d="M105.8 477.7 L107.3 481.0 L108.8 477.7z" fill="#ec7a30"/><circle cx="107.3" cy="476.5" r="0.9" fill="#fff" opacity="0.5"/>
<circle cx="113.5" cy="485" r="2.5" fill="#e0524a"/><path d="M112.0 486.2 L113.5 489.5 L115.0 486.2z" fill="#e0524a"/><circle cx="113.5" cy="485" r="0.9" fill="#fff" opacity="0.5"/>
<text x="139" y="455.4" font-size="3.0" fill="#222" font-weight="bold" textLength="42" lengthAdjust="spacingAndGlyphs">visual faith hope Theatre</text>
<text x="144" y="460.9" font-size="2.7" fill="#7a7a7a"  textLength="45" lengthAdjust="spacingAndGlyphs">story this elements evokes American</text>
<text x="144" y="465.9" font-size="2.7" fill="#7a7a7a"  textLength="15" lengthAdjust="spacingAndGlyphs">what tell</text>
<text x="149" y="471.4" font-size="2.7" fill="#7a7a7a"  textLength="42" lengthAdjust="spacingAndGlyphs">audience traditions evokes through</text>
<text x="149" y="475.9" font-size="2.7" fill="#7a7a7a"  textLength="43" lengthAdjust="spacingAndGlyphs">audience themes emotion American</text>
<text x="149" y="478.9" font-size="2.7" fill="#7a7a7a"  textLength="22" lengthAdjust="spacingAndGlyphs">American this hope</text>
<text x="149" y="483.9" font-size="2.7" fill="#7a7a7a"  textLength="32" lengthAdjust="spacingAndGlyphs">elements Heritage Theatre</text>
<text x="149" y="487.4" font-size="2.7" fill="#7a7a7a"  textLength="12" lengthAdjust="spacingAndGlyphs">story themes</text>
<text x="139" y="492.9" font-size="3.0" fill="#222" font-weight="bold" textLength="33" lengthAdjust="spacingAndGlyphs">resilience this community</text>
<text x="144" y="498.9" font-size="2.7" fill="#7a7a7a"  textLength="33" lengthAdjust="spacingAndGlyphs">emotion Performance tell</text>
<text x="144" y="503.9" font-size="2.7" fill="#7a7a7a"  textLength="38" lengthAdjust="spacingAndGlyphs">visual Heritage themes traditions</text>
<text x="144" y="506.9" font-size="2.7" fill="#7a7a7a"  textLength="10" lengthAdjust="spacingAndGlyphs">of storytelling</text>
<rect x="58.7" y="535.4" width="146.3" height="83.4" fill="#fff" stroke="#c0391b" stroke-width="3"/>
<g transform="translate(60.5 537.1) scale(0.2654) translate(-472 -141)"><use href="#slideart"/>
</g>
<rect x="60" y="635.2" width="143.3" height="80.6" fill="#fff" stroke="#e3e3e3" stroke-width="0.8"/>
<rect x="65" y="641.1999999999999" width="43.7" height="1.4" fill="#5b7a95"/>
<rect x="110.5" y="641.1999999999999" width="42.5" height="1.4" fill="#e48b3b"/>
<rect x="154.8" y="641.1999999999999" width="43.2" height="1.4" fill="#a3abb0"/>
<rect x="65.5" y="643.5" width="43.4" height="62" fill="#c8e2f6"/>
<path d="M66 648 q3 -2.5 6 0z M80 652 q3 -2.5 6 0z M97 660 q4 -3 8 0z M65.5 664 q4 -3 8 0z" fill="#fff"/>
<path d="M65.5 658.5 L86 656 L75 676 Z" fill="#fff"/><path d="M65.5 660 L83 658 L73.5 673 Z" fill="#2e6fc0"/>
<path d="M65.5 675 L84 673 L74.5 691 Z" fill="#fff"/><path d="M65.5 676.5 L81.5 675 L73 688.5 Z" fill="#2e6fc0"/>
<path d="M65.5 697 L88 683 L85 680 L99 678 L96 691 L93 688 L65.5 706 Z" fill="#fff"/><path d="M65.5 699 L88.5 684.5 L86.5 681.5 L97 680 L95 689.5 L92.5 687 L65.5 704 Z" fill="#2e6fc0"/>
<path d="M83 680 L97 680 L95 684 L85 684 Z" fill="#2e6fc0"/>
<path d="M86 703 L98 703 L96 706 L88 706Z M101 702 L108.9 699 V706 H101Z" fill="#2e6fc0"/>
<circle cx="89.5" cy="655.3" r="1.9" fill="#1e1e2e"/>
<path d="M86.5 658.3 h5.5 l1.5 9 h-1.5 l-0.3 -2 v13 h-1.8 v-10 l-0.8 10 h-1.8 v-13 l-0.3 2 h-1.5z" fill="#1f2540"/>
<rect x="88.9" y="658.5" width="1" height="7" fill="#d2548d"/>
<path d="M92 659 L95 656 L93.5 653.5" stroke="#1f2540" stroke-width="1.3" fill="none"/>
<path d="M86 679 h2.5 v1.3 h-3z M90.5 679 h2.5 l0.5 1.3 h-3z" fill="#111"/>
<text x="112.6" y="654.9" font-size="4.69" fill="#5a5a5a" textLength="22.4" lengthAdjust="spacingAndGlyphs">NEXT STEPS</text>
<text x="112.5" y="662.1999999999999" font-size="3.0" fill="#222" font-weight="bold" textLength="29" lengthAdjust="spacingAndGlyphs">story Heritage Audience</text>
<text x="121" y="667.4" font-size="2.7" fill="#7a7a7a"  textLength="70" lengthAdjust="spacingAndGlyphs">evokes hope themes themes resilience emotion connects</text>
<text x="121" y="672.1999999999999" font-size="2.7" fill="#7a7a7a"  textLength="45" lengthAdjust="spacingAndGlyphs">of Theatre does powerful Heritage</text>
<text x="116" y="677.9" font-size="2.7" fill="#7a7a7a"  textLength="33" lengthAdjust="spacingAndGlyphs">connects emotion connects</text>
<text x="121" y="682.4" font-size="2.7" fill="#7a7a7a"  textLength="50" lengthAdjust="spacingAndGlyphs">tell tell elements Heritage story spiritual</text>
<text x="121" y="685.9" font-size="2.7" fill="#7a7a7a"  textLength="5" lengthAdjust="spacingAndGlyphs">Theatre</text>
<text x="116" y="690.9" font-size="2.7" fill="#7a7a7a"  textLength="18" lengthAdjust="spacingAndGlyphs">Heritage of</text>
<text x="121" y="695.4" font-size="2.7" fill="#7a7a7a"  textLength="44" lengthAdjust="spacingAndGlyphs">American themes Heritage through</text>
<text x="121" y="700.4" font-size="2.7" fill="#7a7a7a"  textLength="68" lengthAdjust="spacingAndGlyphs">story American movement this this does spiritual</text>
<defs><linearGradient id="wood" x1="0" y1="0" x2="1" y2="1"><stop offset="0" stop-color="#a0642f" stop-opacity="0.6"/><stop offset="0.5" stop-color="#6e3d1c" stop-opacity="0.4"/><stop offset="1" stop-color="#9a5a28" stop-opacity="0.6"/></linearGradient></defs>
</svg></div>
<div class="a" style="left:226.7px;top:183px;width:4.6px;height:55px;background:#8a8a8a;border-radius:3px"></div>
<div class="a" style="left:742px;top:704.5px;width:44.4px;height:15.5px;background:#e3e3e3;border-radius:3px 3px 0 0"></div>
<div class="a" style="left:913.3px;top:704.5px;width:31.1px;height:15.5px;background:#e3e3e3;border-radius:3px 3px 0 0"></div>
<svg style="left:0;top:0" width="1" height="1" fill="none">
  <path d="M744 710.5 a1.5 1.5 0 0 1 1.5 -1.5 h6.5 a1.5 1.5 0 0 1 1.5 1.5 v4.5 l-4 4 h-4 a1.5 1.5 0 0 1 -1.5 -1.5z M753.5 715 h-2.8 a1.2 1.2 0 0 0 -1.2 1.2 v2.8" stroke="#555" stroke-width="1"/>
  <rect x="924" y="709.5" width="10.5" height="8.5" rx="1.5" stroke="#444" stroke-width="1"/>
  <rect x="926.2" y="711.5" width="4" height="3" fill="#444"/>
  <path d="M926 716 h6.5" stroke="#444" stroke-width="0.8"/>
  <g stroke="#555" stroke-width="0.9"><rect x="956.8" y="709.3" width="4" height="4" rx="1.5"/><rect x="962.8" y="709.3" width="4" height="4" rx="1.5"/><rect x="956.8" y="715.3" width="4" height="4" rx="1.5"/><rect x="962.8" y="715.3" width="4" height="4" rx="1.5"/></g>
  <path d="M989.3 709.5 h10 M990.3 709.5 v5.5 h8 v-5.5 M994.3 715 v3.5 M991.8 718.8 h5" stroke="#555" stroke-width="1"/>
  <path d="M992 712 h4" stroke="#555" stroke-width="0.7"/>
  <path d="M1021.3 714.5 h10" stroke="#555" stroke-width="1"/>
  <path d="M1049.5 714.5 h6" stroke="#c43e1c" stroke-width="1.2"/>
  <circle cx="1060" cy="714.5" r="4" fill="#c43e1c"/>
  <path d="M1066.5 714.5 h75.5" stroke="#5f5f5f" stroke-width="1.3"/>
  <path d="M1160 714.5 h9.5 M1164.75 709.8 v9.4" stroke="#555" stroke-width="1"/>
  <path d="M1221 712 l-1.5 2.5 l1.5 2.5 M1228 712 l1.5 2.5 l-1.5 2.5 M1223.5 711.5 h2 v6 h-2z M1224.5 709 v2 M1224.5 718 v2" stroke="#666" stroke-width="0.9"/>
</svg>

<svg style="left:0;top:0;position:absolute;will-change:transform" width="1280" height="720" font-family="Liberation Sans">
<g transform="translate(60.5 537.1) scale(0.2654) translate(-472 -141)">
<text x="781.2" y="210.6" font-size="14.6" fill="#e6e6e6" stroke="#e6e6e6" stroke-width="0.6" textLength="104.30" lengthAdjust="spacing">WHOLE-CLASS</text>
<text x="781.2" y="229.3" font-size="14.6" fill="#e6e6e6" stroke="#e6e6e6" stroke-width="0.6" textLength="87.60" lengthAdjust="spacing">DISCUSSION</text>
<text x="794" y="257.7" font-size="11.2" fill="#e6e6e6" stroke="#e6e6e6" stroke-width="0.6" textLength="153.00" lengthAdjust="spacing">Share your brainstormed themes.</text>
<text x="813.8" y="275.9" font-size="9.6" fill="#e6e6e6" stroke="#e6e6e6" stroke-width="0.6" textLength="133.20" lengthAdjust="spacing">Provide and receive constructive</text>
<text x="813.8" y="287.4" font-size="9.6" fill="#e6e6e6" stroke="#e6e6e6" stroke-width="0.6" textLength="40.00" lengthAdjust="spacing">feedback:</text>
<text x="831" y="305.8" font-size="9.2" fill="#e6e6e6" stroke="#e6e6e6" stroke-width="0.6" textLength="132.90" lengthAdjust="spacing">Does the theme align with the brief?</text>
<text x="831" y="321" font-size="9.2" fill="#e6e6e6" stroke="#e6e6e6" stroke-width="0.6" textLength="135.00" lengthAdjust="spacing">Is it engaging for the target audience?</text>
<text x="831" y="337.3" font-size="9.2" fill="#e6e6e6" stroke="#e6e6e6" stroke-width="0.6" textLength="143.50" lengthAdjust="spacing">How can it connect to a clear concept?</text>
<text x="795" y="355.7" font-size="11" fill="#e6e6e6" stroke="#e6e6e6" stroke-width="0.6" font-weight="bold" textLength="122.00" lengthAdjust="spacing">Encourage Refinement:</text>
<text x="813.8" y="374.2" font-size="9.6" fill="#e6e6e6" stroke="#e6e6e6" stroke-width="0.6" textLength="149.60" lengthAdjust="spacing">Think about how to strengthen your</text>
<text x="813.8" y="386.25" font-size="9.6" fill="#e6e6e6" stroke="#e6e6e6" stroke-width="0.6" textLength="104.90" lengthAdjust="spacing">theme based on feedback.</text>
</g>
<text x="116" y="23" font-size="11.8" fill="#3b3b3b" textLength="291.00" lengthAdjust="spacing" >2. Lesson Series - Outlining the Event Concept and Theme</text>
<text x="523.1" y="22.5" font-size="11.6" fill="#6f6f6f" textLength="80.00" lengthAdjust="spacing" >Search (Alt + Q)</text>
<text x="1224.2" y="22" font-size="10.4" fill="#3a3a3a" textLength="12.60" lengthAdjust="spacing" stroke="#3a3a3a" stroke-width="0.15">PD</text>
<text x="44.5" y="55.2" font-size="10.853873751575682" fill="#5c5c5c" textLength="16.50" lengthAdjust="spacing" >File</text>
<text x="130.8" y="55.2" font-size="11.52811670258957" fill="#5c5c5c" textLength="27.20" lengthAdjust="spacing" >Insert</text>
<text x="178" y="55.2" font-size="11.6" fill="#5c5c5c" textLength="26.00" lengthAdjust="spacing" >Draw</text>
<text x="223" y="55.2" font-size="11.57766344585268" fill="#5c5c5c" textLength="34.00" lengthAdjust="spacing" >Design</text>
<text x="277.7" y="55.2" font-size="11.531063788690911" fill="#5c5c5c" textLength="52.80" lengthAdjust="spacing" >Transitions</text>
<text x="350.75" y="55.2" font-size="11.6" fill="#5c5c5c" textLength="56.75" lengthAdjust="spacing" >Animations</text>
<text x="427.5" y="55.2" font-size="11.6" fill="#5c5c5c" textLength="55.00" lengthAdjust="spacing" >Slide Show</text>
<text x="502" y="55.2" font-size="11.153109363831309" fill="#5c5c5c" textLength="34.50" lengthAdjust="spacing" >Review</text>
<text x="555.75" y="55.2" font-size="11.6" fill="#5c5c5c" textLength="24.25" lengthAdjust="spacing" >View</text>
<text x="599" y="55.2" font-size="11.6" fill="#5c5c5c" textLength="23.50" lengthAdjust="spacing" >Help</text>
<text x="80.4" y="55.2" font-size="11.6" fill="#242424" font-weight="bold" textLength="31.60" lengthAdjust="spacing" >Home</text>
<text x="873.9" y="53.9" font-size="9.9" fill="#424242" textLength="46.40" lengthAdjust="spacing" >Comments</text>
<text x="957.5" y="53.9" font-size="9.9" fill="#424242" textLength="37.90" lengthAdjust="spacing" >Catch up</text>
<text x="1032.8" y="53.9" font-size="9.9" fill="#424242" textLength="31.70" lengthAdjust="spacing" >Present</text>
<text x="1118.5" y="53.9" font-size="9.9" fill="#424242" textLength="29.90" lengthAdjust="spacing" >Editing</text>
<text x="1198.8" y="53.9" font-size="9.9" fill="#ffffff" textLength="23.90" lengthAdjust="spacing" >Share</text>
<text x="395" y="88.5" font-size="12" fill="#bdbdbd" textLength="11.00" lengthAdjust="spacing" >12</text>
<text x="781.2" y="210.6" font-size="14.6" fill="#f3f3f3" textLength="104.30" lengthAdjust="spacing" stroke="#f3f3f3" stroke-width="0.25">WHOLE-CLASS</text>
<text x="781.2" y="229.3" font-size="14.6" fill="#f3f3f3" textLength="87.60" lengthAdjust="spacing" stroke="#f3f3f3" stroke-width="0.25">DISCUSSION</text>
<text x="794" y="257.7" font-size="11.2" fill="#f3f3f3" textLength="153.00" lengthAdjust="spacing" stroke="#f3f3f3" stroke-width="0.25">Share your brainstormed themes.</text>
<text x="813.8" y="275.9" font-size="9.6" fill="#f3f3f3" textLength="133.20" lengthAdjust="spacing" stroke="#f3f3f3" stroke-width="0.25">Provide and receive constructive</text>
<text x="813.8" y="287.4" font-size="9.6" fill="#f3f3f3" textLength="40.00" lengthAdjust="spacing" stroke="#f3f3f3" stroke-width="0.25">feedback:</text>
<text x="831" y="305.8" font-size="9.2" fill="#f3f3f3" textLength="132.90" lengthAdjust="spacing" stroke="#f3f3f3" stroke-width="0.25">Does the theme align with the brief?</text>
<text x="831" y="321" font-size="9.2" fill="#f3f3f3" textLength="135.00" lengthAdjust="spacing" stroke="#f3f3f3" stroke-width="0.25">Is it engaging for the target audience?</text>
<text x="831" y="337.3" font-size="9.2" fill="#f3f3f3" textLength="143.50" lengthAdjust="spacing" stroke="#f3f3f3" stroke-width="0.25">How can it connect to a clear concept?</text>
<text x="795" y="355.7" font-size="11" fill="#f3f3f3" font-weight="bold" textLength="122.00" lengthAdjust="spacing" stroke="#f3f3f3" stroke-width="0.25">Encourage Refinement:</text>
<text x="813.8" y="374.2" font-size="9.6" fill="#f3f3f3" textLength="149.60" lengthAdjust="spacing" stroke="#f3f3f3" stroke-width="0.25">Think about how to strengthen your</text>
<text x="813.8" y="386.25" font-size="9.6" fill="#f3f3f3" textLength="104.90" lengthAdjust="spacing" stroke="#f3f3f3" stroke-width="0.25">theme based on feedback.</text>
<text x="245.8" y="508.0" font-size="11.1" fill="#222222" font-weight="bold" textLength="125.50" lengthAdjust="spacing" stroke="#222" stroke-width="0.15" transform="matrix(1 0 0 1.075 0 -38.100)">Whole-Class Discussion</text>
<text x="245.8" y="523.6999999999999" font-size="11.1" fill="#222222" font-weight="bold" textLength="47.40" lengthAdjust="spacing" stroke="#222" stroke-width="0.15" transform="matrix(1 0 0 1.075 0 -39.277)">Purpose:</text>
<text x="245.4" y="540.1999999999999" font-size="11.9" fill="#222222" textLength="244.20" lengthAdjust="spacing" stroke="#222" stroke-width="0.3">Share and refine ideas through peer feedback.</text>
<text x="245.8" y="554.6" font-size="11.1" fill="#222222" font-weight="bold" textLength="80.40" lengthAdjust="spacing" stroke="#222" stroke-width="0.15" transform="matrix(1 0 0 1.075 0 -41.595)">Teacher Notes:</text>
<text x="245.4" y="571.0" font-size="11.9" fill="#222222" textLength="186.60" lengthAdjust="spacing" stroke="#222" stroke-width="0.3">•Facilitate a whole-class discussion:</text>
<text x="309.3" y="587.3" font-size="11.9" fill="#222222" textLength="227.30" lengthAdjust="spacing" stroke="#222" stroke-width="0.3">Students share their brainstormed themes.</text>
<text x="309.3" y="602.8" font-size="11.9" fill="#222222" textLength="177.70" lengthAdjust="spacing" stroke="#222" stroke-width="0.3">Encourage constructive feedback:</text>
<text x="344" y="618.3" font-size="11.9" fill="#222222" textLength="204.00" lengthAdjust="spacing" stroke="#222" stroke-width="0.3">“Does the theme align with the brief?”</text>
<text x="344" y="633.8" font-size="11.9" fill="#222222" textLength="211.00" lengthAdjust="spacing" stroke="#222" stroke-width="0.3">“Is it engaging for the target audience?”</text>
<text x="344" y="649.3" font-size="11.9" fill="#222222" textLength="215.40" lengthAdjust="spacing" stroke="#222" stroke-width="0.3">“How can it connect to a clear concept?”</text>
<text x="245.4" y="664.8" font-size="11.9" fill="#222222" textLength="110.20" lengthAdjust="spacing" stroke="#222" stroke-width="0.3">•Prompt refinement:</text>
<text x="309.3" y="680.3" font-size="11.9" fill="#222222" textLength="292.30" lengthAdjust="spacing" stroke="#222" stroke-width="0.3">“What feedback will help you strengthen your theme?”</text>
<text x="44.9" y="153.4" font-size="11" fill="#424242" >8</text>
<text x="44.9" y="252.2" font-size="11" fill="#424242" >9</text>
<text x="42.4" y="351.2" font-size="11" fill="#424242" >10</text>
<text x="43.6" y="450.8" font-size="11" fill="#424242" >11</text>
<text x="42.8" y="550" font-size="11" fill="#c0391b" >12</text>
<text x="42.8" y="649.5" font-size="11" fill="#424242" >13</text>
<text x="48.5" y="718.6" font-size="10" fill="#616161" textLength="59.10" lengthAdjust="spacing" >Slide 12 of 55</text>
<text x="121.5" y="718.6" font-size="10" fill="#616161" textLength="55.00" lengthAdjust="spacing" >English (U.S.)</text>
<text x="758" y="718.6" font-size="10" fill="#616161" textLength="25.20" lengthAdjust="spacing" >Notes</text>
<text x="791.3" y="718.6" font-size="10" fill="#616161" textLength="117.00" lengthAdjust="spacing" >Give Feedback to Microsoft</text>
<text x="1185" y="718.6" font-size="10" fill="#616161" textLength="18.80" lengthAdjust="spacing" >52%</text>
</svg>
</body></html>
